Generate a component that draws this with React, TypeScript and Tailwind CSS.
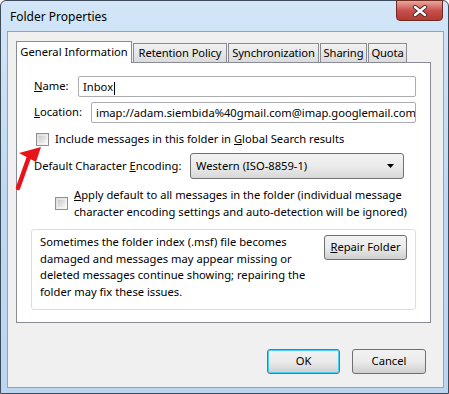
import React from "react";

const font = { fontFamily: '"Segoe UI", "Noto Sans", sans-serif' };

const tabs = [
  { label: "Retention Policy", w: "w-[94px]" },
  { label: "Synchronization", w: "w-[91px]" },
  { label: "Sharing", w: "w-[47px]" },
  { label: "Quota", w: "w-[39px]" },
];

const Check = () => (
  <span className="inline-block shrink-0 w-[13px] h-[13px] border border-[#8f8f8f] bg-gradient-to-br from-[#dcdcdc] to-[#fbfbfb] p-[2px]">
    <span className="block w-full h-full bg-gradient-to-br from-[#cbcbcb] to-[#f4f4f4]" />
  </span>
);

const Button = ({ children, className = "" }: { children: React.ReactNode; className?: string }) => (
  <button
    className={`h-[25px] rounded-[3px] border border-[#707070] bg-gradient-to-b from-[#f2f2f2] via-[#ebebeb] to-[#cfcfcf] text-black whitespace-nowrap ${className}`}
  >
    {children}
  </button>
);

export default function App() {
  return (
    <div
      style={font}
      className="relative w-[449px] h-[394px] flex flex-col rounded-t-[6px] border border-[#3d4a5a] bg-gradient-to-b from-[#d3e6f8] via-[#bfd8f2] to-[#bcd6f1] pl-[6px] pr-[4px] pb-[5px] text-[11.2px] text-black"
    >
      <div className="h-[30px] flex items-start justify-between">
        <span className="mt-[7px] ml-[3px] text-[12px]">Folder Properties</span>
        <div className="w-[47px] h-[21px] -mt-px mr-px rounded-b-[4px] border border-[#6e2a24] bg-gradient-to-b from-[#e9a99c] via-[#c75050] to-[#b33a2e] flex items-center justify-center">
          <svg width="16" height="12" viewBox="0 0 16 12">
            <path d="M3 2 L13 10 M13 2 L3 10" stroke="#4b2a2a" strokeWidth="4.2" strokeLinecap="round" />
            <path d="M3 2 L13 10 M13 2 L3 10" stroke="#ffffff" strokeWidth="2.4" strokeLinecap="round" />
          </svg>
        </div>
      </div>

      <div className="flex-1 flex flex-col border border-[#8ea4bd] bg-[#f0f0f0] pt-[8px] pl-[8px] pr-[12px]">
        <div className="flex items-end h-[22px] whitespace-nowrap">
          <div className="w-[116px] h-[22px] leading-[20px] text-center border border-b-0 border-[#898c95] bg-white relative z-10 -mb-px">
            General Information
          </div>
          {tabs.map((t) => (
            <div
              key={t.label}
              className={`${t.w} h-[19px] ml-[1px] flex justify-center border border-b-0 border-[#898c95] bg-gradient-to-b from-[#f2f2f2] to-[#dbdbdb] leading-[18px] tracking-[-0.1px]`}
            >
              {t.label}
            </div>
          ))}
        </div>

        <div className="h-[261px] border border-[#898c95] bg-white pl-[17px] pr-[14px] pt-[13px] flex flex-col whitespace-nowrap">
          <div className="flex items-center h-[21px]">
            <span className="w-[44px]">
              <u>N</u>ame:
            </span>
            <div className="flex-1 h-[21px] border border-[#abadb3] rounded-[2px] px-[4px] leading-[19px]">
              Inbox<span className="inline-block w-px h-[13px] bg-black align-middle ml-px" />
            </div>
          </div>
          <div className="flex items-center h-[21px] mt-[5px]">
            <span className="w-[57px]">
              <u>L</u>ocation:
            </span>
            <div className="flex-1 min-w-0 h-[21px] border border-[#abadb3] rounded-[2px] px-[4px] leading-[19px] overflow-hidden">
              imap://adam.siembida%40gmail.com@imap.googlemail.com
            </div>
          </div>
          <div className="flex items-center mt-[10px] ml-[2px] h-[13px]">
            <Check />
            <span className="ml-[6px]">
              Include messages in this folder in <u>G</u>lobal Search results
            </span>
          </div>
          <div className="flex items-center mt-[7px] h-[26px]">
            <span className="w-[156px]">
              Default Character <u>E</u>ncoding:
            </span>
            <div className="w-[214px] h-[26px] rounded-[3px] border border-[#707070] bg-gradient-to-b from-[#f2f2f2] via-[#ebebeb] to-[#d8d8d8] flex items-center justify-between pl-[5px] pr-[9px]">
              <span>Western (ISO-8859-1)</span>
              <svg width="7" height="4" viewBox="0 0 7 4">
                <path d="M0 0 L7 0 L3.5 4 Z" fill="#000" />
              </svg>
            </div>
          </div>
          <div className="flex items-center mt-[7px] ml-[21px]">
            <Check />
            <span className="ml-[6px] leading-[17px]">
              <u>A</u>pply default to all messages in the folder (individual message
              <br />
              character encoding settings and auto-detection will be ignored)
            </span>
          </div>
          <div className="mt-[9px] -ml-[3px] h-[81px] rounded-[3px] border border-[#d5dfe5] flex justify-between pl-[8px] pr-[8px] pt-[4px]">
            <p className="leading-[16.5px]">
              Sometimes the folder index (.msf) file becomes
              <br />
              damaged and messages may appear missing or
              <br />
              deleted messages continue showing; repairing the
              <br />
              folder may fix these issues.
            </p>
            <Button className="w-[83px] mt-px">
              <u>R</u>epair Folder
            </Button>
          </div>
        </div>

        <div className="flex justify-end gap-[12px] mt-[26px] mr-[5px]">
          <Button className="w-[73px] border-[#3c7fb1] shadow-[inset_0_0_0_1px_#48d0f7]">OK</Button>
          <Button className="w-[74px]">Cancel</Button>
        </div>
      </div>

      <svg className="absolute -left-px -top-px pointer-events-none" width="449" height="394">
        <path d="M18 188 L29 157" stroke="#e8141a" strokeWidth="4.5" strokeLinecap="round" />
        <path d="M41 147 L19 153 L36 162 Z" fill="#e8141a" />
      </svg>
    </div>
  );
}
